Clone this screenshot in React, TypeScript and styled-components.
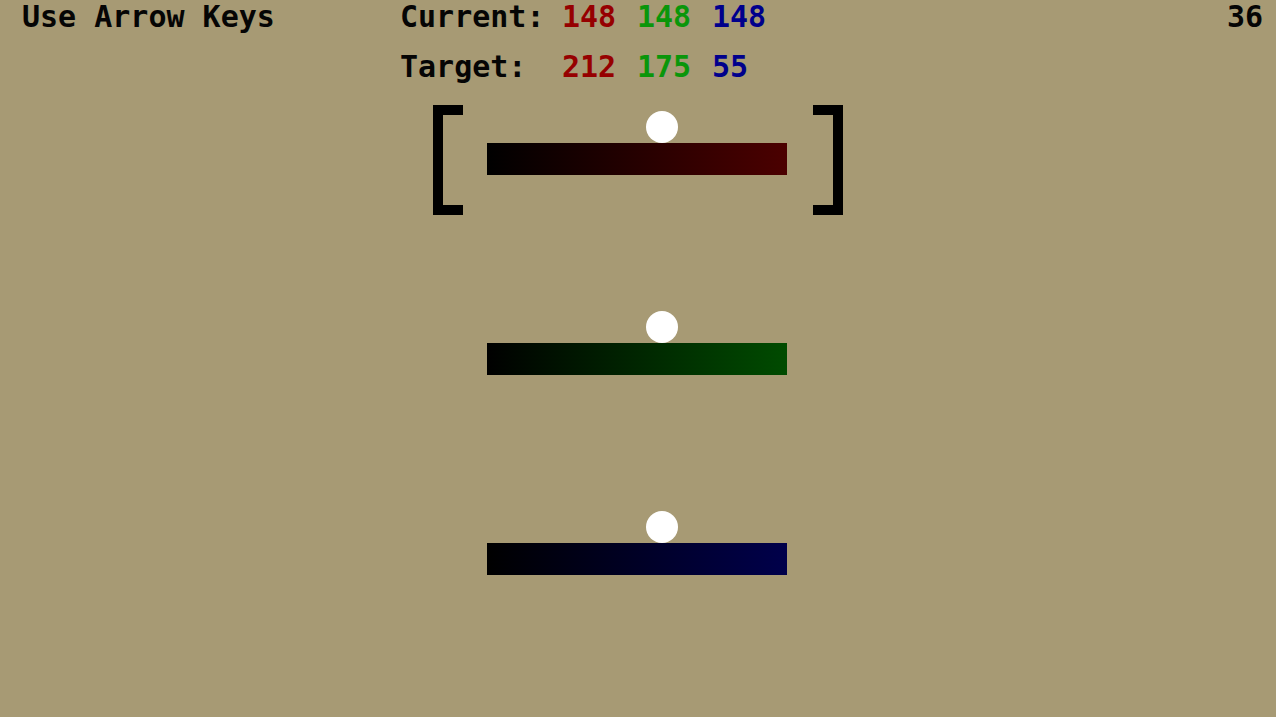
import React, { useState } from "react";
import styled, { createGlobalStyle } from "styled-components";

const GlobalStyle = createGlobalStyle`
  * { box-sizing: border-box; }
  body {
    margin: 0;
    background: #a79a74;
    color: #050505;
    font: bold 30px/34px "DejaVu Sans Mono", monospace;
  }
`;

const Header = styled.header`
  display: grid;
  grid-template-columns: 378px 1fr auto;
  align-items: start;
  height: 105px;
  padding: 0 13px 0 22px;
`;

const Line = styled.p`
  margin: 0;
`;

const Readout = styled.table`
  border-collapse: collapse;
  table-layout: fixed;
  width: 387px;
  text-align: left;
`;

const Label = styled.th`
  width: 162px;
  padding: 0 0 16px;
`;

const Value = styled.td<{ $color: string }>`
  width: 75px;
  padding: 0 0 16px;
  color: ${(p) => p.$color};
`;

const Channels = styled.main`
  display: flex;
  flex-direction: column;
  align-items: center;
  gap: 90px;
`;

const Channel = styled.div`
  display: flex;
  justify-content: space-between;
  width: 410px;
  height: 110px;
`;

const Bracket = styled.span<{ $side: "left" | "right"; $active: boolean }>`
  width: 30px;
  border: 10px solid #000;
  border-${(p) => (p.$side === "left" ? "right" : "left")}: 0;
  visibility: ${(p) => (p.$active ? "visible" : "hidden")};
`;

const Slider = styled.input<{ $end: string }>`
  appearance: none;
  width: 332px;
  height: 64px;
  margin: 6px 0 0;
  background: none;
  outline: none;

  &::-webkit-slider-runnable-track {
    height: 64px;
    background: linear-gradient(to right, #000, ${(p) => p.$end}) 15px 32px / 300px 32px no-repeat;
  }

  &::-webkit-slider-thumb {
    appearance: none;
    width: 32px;
    height: 32px;
    border-radius: 50%;
    background: #fff;
  }
`;

const channels = [
  { name: "Red", text: "#960000", end: "#4b0000", target: 212 },
  { name: "Green", text: "#0a960a", end: "#004b00", target: 175 },
  { name: "Blue", text: "#00008c", end: "#00004b", target: 55 },
];

export default function App() {
  const [values, setValues] = useState([148, 148, 148]);
  const [active, setActive] = useState(0);

  return (
    <>
      <GlobalStyle />
      <Header>
        <Line>Use Arrow Keys</Line>
        <Readout>
          <tbody>
            <tr>
              <Label scope="row">Current:</Label>
              {channels.map((c, i) => (
                <Value key={c.name} $color={c.text}>{values[i]}</Value>
              ))}
            </tr>
            <tr>
              <Label scope="row">Target:</Label>
              {channels.map((c) => (
                <Value key={c.name} $color={c.text}>{c.target}</Value>
              ))}
            </tr>
          </tbody>
        </Readout>
        <Line>36</Line>
      </Header>
      <Channels>
        {channels.map((c, i) => (
          <Channel key={c.name}>
            <Bracket $side="left" $active={i === active} />
            <Slider
              type="range"
              min={0}
              max={255}
              value={values[i]}
              aria-label={c.name}
              $end={c.end}
              onFocus={() => setActive(i)}
              onChange={(e) =>
                setValues(values.map((v, j) => (j === i ? Number(e.target.value) : v)))
              }
            />
            <Bracket $side="right" $active={i === active} />
          </Channel>
        ))}
      </Channels>
    </>
  );
}
